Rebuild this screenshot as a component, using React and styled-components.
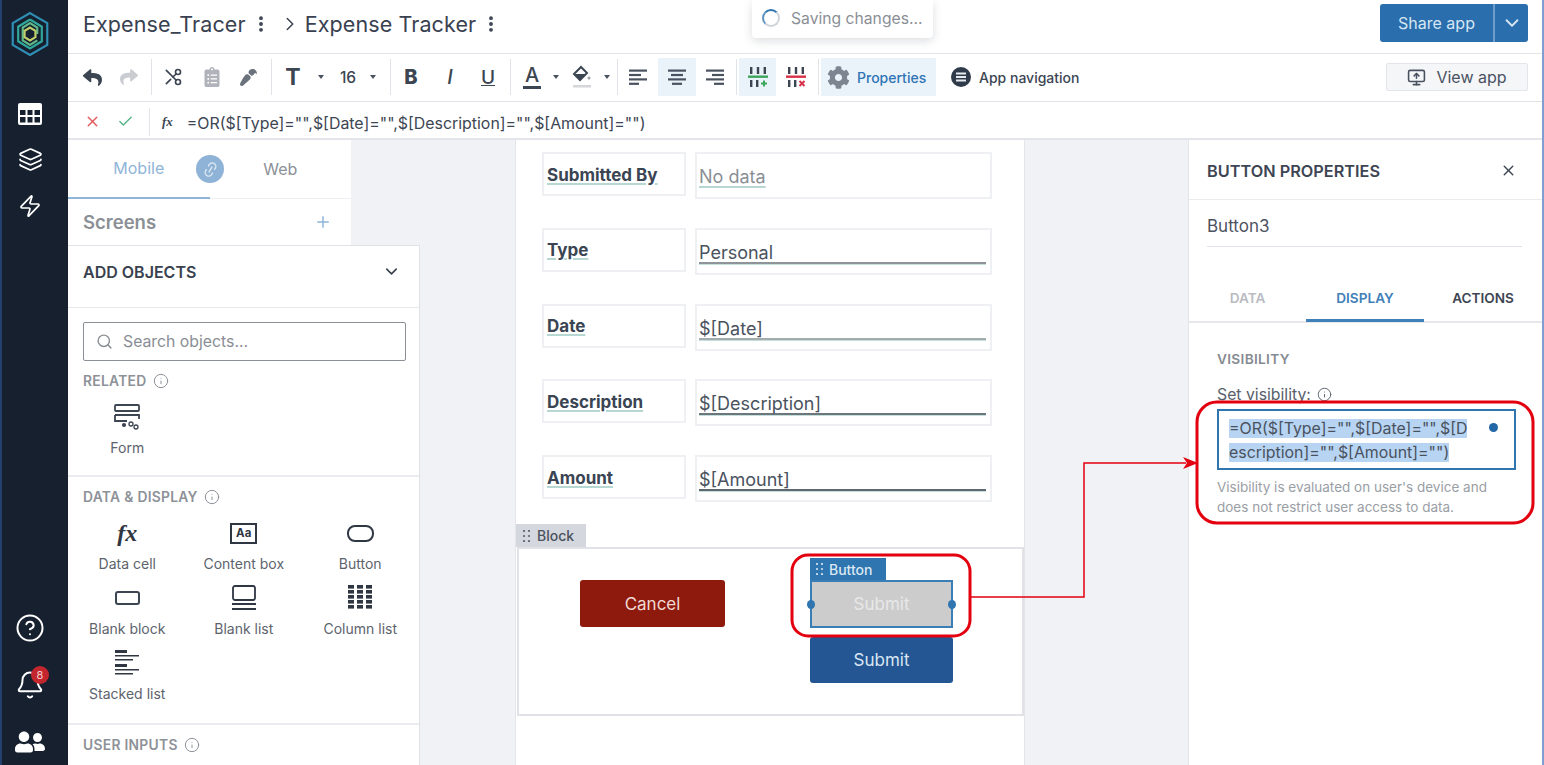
import React from 'react';
import styled, { createGlobalStyle } from 'styled-components';
import { Layers, Zap, CircleHelp, Bell, Search, Info, ChevronDown, ChevronRight, Plus, X, Check, EllipsisVertical, Scissors, Link2, MonitorUp } from 'lucide-react';
import { FaReply, FaShare, FaClipboardList, FaPaintBrush, FaUserFriends, FaCog } from 'react-icons/fa';

const Global = createGlobalStyle`
  html, body { margin: 0; padding: 0; background: #fff; }
  body { font-family: Inter, "Open Sans", sans-serif; color: #2b3441; overflow: hidden; }
  * { box-sizing: border-box; }
`;

const Page = styled.div`
  position: relative;
  display: flex;
  width: 1544px;
  height: 765px;
  overflow: hidden;
  border-right: 2px solid #7f9fd0;
`;
const Nav = styled.nav`
  width: 68px;
  flex: none;
  background: #17202f;
  border-left: 2px solid #24406e;
  display: flex;
  flex-direction: column;
  align-items: center;
  color: #fff;
  padding: 11px 10px 0 0;
`;
const NavTop = styled.div`
  display: flex;
  flex-direction: column;
  align-items: center;
  gap: 22px;
  margin-top: 46px;
`;
const NavBottom = styled.div`
  margin-top: auto;
  display: flex;
  flex-direction: column;
  align-items: center;
  gap: 27px;
  padding-bottom: 8px;
`;
const BellWrap = styled.div`
  position: relative;
  height: 30px;
`;
const Badge = styled.span`
  position: absolute;
  top: -4px;
  right: -4px;
  width: 18px;
  height: 18px;
  border-radius: 50%;
  background: #c4262e;
  color: #f3d0d0;
  font-size: 11px;
  display: flex;
  align-items: center;
  justify-content: center;
`;
const Main = styled.div`
  flex: 1;
  display: flex;
  flex-direction: column;
  min-width: 0;
`;
const Header = styled.header`
  height: 54px;
  flex: none;
  display: flex;
  align-items: center;
  padding: 0 14px 6px 15px;
  border-bottom: 1px solid #e1e4e9;
  font-size: 21.5px;
  color: #394150;
`;
const Crumb = styled.span`
  font-weight: 400;
  letter-spacing: 0.1px;
`;
const Kebab = styled(EllipsisVertical)`
  margin: 0 ${p => p.$right}px 0 ${p => p.$left}px;
`;
const CrumbArrow = styled(ChevronRight)`
  margin: 0 4px 0 4px;
`;
const Share = styled.div`
  margin-left: auto;
  display: flex;
  height: 38px;
  margin-top: -2px;
  border-radius: 3px;
  overflow: hidden;
  background: #2a6ead;
  color: #d7e6f3;
  font-size: 16px;
  align-items: center;
`;
const ShareLabel = styled.span`
  width: 115px;
  text-align: center;
  line-height: 38px;
  border-right: 2px solid #6d9ecb;
`;
const ShareCaret = styled.span`
  width: 33px;
  display: flex;
  justify-content: center;
`;
const Toolbar = styled.div`
  height: 48px;
  flex: none;
  display: flex;
  align-items: center;
  padding: 0 0 1px 6px;
  border-bottom: 1px solid #dfe2e7;
  color: #3c4552;
`;
const Tool = styled.span`
  width: ${p => p.$w}px;
  height: 38px;
  flex: none;
  display: flex;
  align-items: center;
  justify-content: center;
  margin-left: ${p => p.$left || 0}px;
  background: ${p => (p.$active ? '#eaf2fa' : 'transparent')};
  color: ${p => p.$color || 'inherit'};
  font-size: ${p => p.$size || 18}px;
  font-weight: ${p => p.$weight || 500};
  font-style: ${p => (p.$italic ? 'italic' : 'normal')};
  text-decoration: ${p => (p.$under ? 'underline' : 'none')};
`;
const CutIcon = styled(Scissors)`
  transform: scaleX(-1);
`;
const BrushIcon = styled(FaPaintBrush)`
  transform: rotate(180deg);
`;
const Sep = styled.span`
  width: 1px;
  height: 36px;
  flex: none;
  background: #e0e3e8;
  margin-left: ${p => p.$gap}px;
`;
const Caret = styled.span`
  width: ${p => p.$w}px;
  flex: none;
  display: flex;
  justify-content: center;
  &::after {
    content: '';
    border: 3px solid transparent;
    border-top: 4px solid #4a5260;
    border-bottom: 0;
  }
`;
const PropsTool = styled.span`
  width: 115px;
  height: 38px;
  margin-left: 2px;
  flex: none;
  display: flex;
  align-items: center;
  gap: 7px;
  padding-left: 6px;
  background: #eaf2fa;
  color: #2f75b5;
  font-size: 14px;
  font-weight: 500;
`;
const NavTool = styled.span`
  display: flex;
  align-items: center;
  gap: 8px;
  margin-left: 15px;
  font-size: 14px;
  font-weight: 500;
`;
const ViewApp = styled.span`
  margin-left: auto;
  margin-right: 14px;
  width: 142px;
  height: 28px;
  display: flex;
  align-items: center;
  justify-content: center;
  gap: 10px;
  background: #f5f6f8;
  border: 1px solid #e3e5ea;
  border-radius: 2px;
  font-size: 16px;
  color: #4a5260;
`;
const Formula = styled.div`
  height: 38px;
  flex: none;
  display: flex;
  align-items: center;
  border-bottom: 2px solid #e3e5ea;
  padding: 3px 0 0 16px;
  font-size: 15.9px;
  color: #3d4653;
`;
const FormulaSep = styled.span`
  width: 1px;
  height: 28px;
  background: #e3e5ea;
  margin: 0 12px 0 15px;
`;
const ConfirmIcon = styled(Check)`
  margin-left: 16px;
`;
const FormulaText = styled.span`
  margin: 3px 0 0 14px;
`;
const Fx = styled.i`
  font-family: "Liberation Serif", serif;
  font-weight: 700;
  font-size: ${p => p.$size || 13}px;
  color: ${p => p.$color || '#3d4653'};
`;
const Workspace = styled.div`
  flex: 1;
  display: flex;
  background: #f0f2f5;
  min-height: 0;
`;
const LeftCol = styled.div`
  width: 352px;
  flex: none;
`;
const ModeTabs = styled.div`
  width: 283px;
  height: 105px;
  background: #fff;
`;
const TabRow = styled.div`
  position: relative;
  height: 59px;
  display: flex;
  align-items: center;
  border-bottom: 1px solid #eceef1;
  font-size: 16px;
`;
const ModeTab = styled.span`
  width: 142px;
  height: 59px;
  display: flex;
  align-items: center;
  justify-content: center;
  color: ${p => (p.$on ? '#8fb5d8' : '#8c9097')};
  border-bottom: ${p => (p.$on ? '2px solid #8fb5d8' : 'none')};
`;
const LinkCircle = styled.span`
  position: absolute;
  left: 128px;
  top: 15px;
  width: 28px;
  height: 28px;
  border-radius: 50%;
  background: #8fb3d6;
  color: #d8e6f2;
  display: flex;
  align-items: center;
  justify-content: center;
  svg {
    transform: rotate(-60deg);
  }
`;
const ScreensRow = styled.div`
  height: 46px;
  display: flex;
  align-items: center;
  justify-content: space-between;
  padding: 0 19px 1px 15px;
  font-size: 18.5px;
  font-weight: 600;
  color: #8b8f96;
`;
const AddPanel = styled.div`
  height: 520px;
  background: #fff;
  border-top: 1px solid #dfe2e7;
  border-right: 1px solid #dfe2e7;
`;
const AddHeader = styled.div`
  height: 62px;
  display: flex;
  justify-content: space-between;
  padding: 16px 18px 0 15px;
  font-size: 16px;
  font-weight: 600;
  color: #39414e;
  border-bottom: 1px solid #e6e8ec;
`;
const SearchBox = styled.div`
  height: 39px;
  margin: 14px 13px 0 15px;
  display: flex;
  align-items: center;
  gap: 10px;
  padding-left: 12px;
  border: 1px solid #8b8f96;
  border-radius: 2px;
  font-size: 15.8px;
  color: #8a8e95;
`;
const Group = styled.div`
  padding: 12px 0 0 15px;
  height: ${p => p.$h}px;
  border-bottom: ${p => (p.$last ? 'none' : '2px solid #e9ebef')};
`;
const GroupTitle = styled.div`
  display: flex;
  align-items: center;
  gap: 6px;
  font-size: 13.8px;
  font-weight: 600;
  letter-spacing: 0.3px;
  color: #8d9198;
  height: 16px;
`;
const ObjectGrid = styled.div`
  display: grid;
  grid-template-columns: repeat(3, 116.5px);
  grid-auto-rows: 65px;
  margin: 12px 0 0 -14px;
  width: 350px;
`;
const ObjectCell = styled.div`
  display: flex;
  flex-direction: column;
  align-items: center;
  color: #2f3743;
`;
const ObjectIcon = styled.div`
  height: 32px;
  display: flex;
  align-items: center;
  justify-content: center;
`;
const ObjectLabel = styled.div`
  font-size: 14px;
  color: #5d636d;
  margin-top: 6px;
`;
const Canvas = styled.div`
  flex: 1;
  padding-left: 95px;
`;
const PhoneFrame = styled.div`
  width: 510px;
  height: 100%;
  background: #fff;
  border-left: 1px solid #e3e5ea;
  border-right: 1px solid #e3e5ea;
  padding-top: 12px;
`;
const FormRows = styled.div`
  display: flex;
  flex-direction: column;
  gap: 28.8px;
  padding-left: 26px;
`;
const FormRow = styled.div`
  display: flex;
  gap: 9px;
  align-items: flex-start;
`;
const LabelBox = styled.div`
  width: 144px;
  height: 44px;
  border: 2px solid #eff0f3;
  padding: 1px 0 0 3px;
  display: flex;
  align-items: center;
  font-size: 17px;
  font-weight: 700;
  color: #3a4452;
  span {
    text-decoration: underline 2px #b7d8d2;
    text-underline-offset: 2px;
  }
`;
const ValueBox = styled.div`
  width: 297px;
  height: 47px;
  border: 2px solid #eff0f3;
  padding: 11px 4px 0 2px;
  font-size: 18px;
  line-height: 24px;
  color: ${p => (p.$empty ? '#8a8f96' : '#4a525e')};
`;
const ValueText = styled.div`
  height: 23px;
  border-bottom: ${p => (p.$empty ? 'none' : `2px solid ${p.$line}`)};
  box-shadow: ${p => (p.$empty ? 'none' : '0 1px 0 #c5e0da')};
  span {
    text-decoration: ${p => (p.$empty ? 'underline 2px #b7d8d2' : 'none')};
    text-underline-offset: 3px;
  }
`;
const BlockTab = styled.div`
  width: 70px;
  height: 23px;
  margin-top: 22px;
  display: flex;
  align-items: center;
  gap: 6px;
  padding-left: 7px;
  background: #d4d7dd;
  color: #4a525e;
  font-size: 14px;
  font-weight: 500;
`;
const Block = styled.div`
  height: 169px;
  margin-left: 1px;
  width: 507px;
  border: 2px solid #e0e2e7;
  display: flex;
  padding: 9px 0 0 61px;
`;
const BlockCol = styled.div`
  width: ${p => p.$w}px;
  margin-left: ${p => p.$left || 0}px;
  padding-top: ${p => p.$top || 0}px;
`;
const ActionButton = styled.div`
  height: ${p => p.$h}px;
  display: flex;
  align-items: center;
  justify-content: center;
  background: ${p => p.$bg};
  color: ${p => p.$fg};
  border-radius: 3px;
  font-size: 17px;
`;
const ButtonTab = styled.div`
  width: 76px;
  height: 22px;
  display: flex;
  align-items: center;
  gap: 5px;
  padding-left: 6px;
  background: #2f75b0;
  color: #dbe8f4;
  font-size: 14px;
  font-weight: 500;
`;
const SelectedButton = styled.div`
  position: relative;
  height: 48px;
  display: flex;
  align-items: center;
  justify-content: center;
  background: #cccccc;
  border: 2px solid #3b7eb6;
  color: #e8e8e8;
  font-size: 17px;
`;
const Handle = styled.span`
  position: absolute;
  top: 18px;
  ${p => p.$side}: -5px;
  width: 8px;
  height: 9px;
  border-radius: 50%;
  background: #2f75b0;
`;
const SubmitWrap = styled.div`
  margin-top: 9px;
`;
const RightPanel = styled.aside`
  width: 354px;
  flex: none;
  background: #fff;
  border-left: 1px solid #e3e5ea;
`;
const PanelHead = styled.div`
  height: 60px;
  display: flex;
  align-items: center;
  justify-content: space-between;
  padding: 2px 25px 0 18px;
  border-bottom: 1px solid #e9ebef;
  font-size: 16.3px;
  font-weight: 600;
  color: #3d4553;
`;
const NameField = styled.div`
  height: 47px;
  margin: 0 20px 0 18px;
  padding-top: 6px;
  display: flex;
  align-items: center;
  border-bottom: 1px solid #dfe2e7;
  font-size: 17px;
  color: #4d545f;
`;
const PropTabs = styled.div`
  height: 76px;
  display: flex;
  align-items: flex-end;
  border-bottom: 2px solid #e6e8ec;
`;
const PropTab = styled.span`
  width: ${p => p.$w}px;
  height: 50px;
  display: flex;
  align-items: center;
  justify-content: center;
  font-size: 13.6px;
  font-weight: 600;
  color: ${p => p.$color};
  border-bottom: ${p => (p.$on ? '3px solid #3f80b8' : 'none')};
  margin-bottom: -1px;
  padding-top: ${p => (p.$on ? '4px' : '1px')};
`;
const PanelBody = styled.div`
  padding: 28px 27px 0 28px;
`;
const SectionTitle = styled.div`
  font-size: 13.7px;
  font-weight: 600;
  letter-spacing: 0.3px;
  color: #868b93;
`;
const SetLabel = styled.div`
  display: flex;
  align-items: center;
  gap: 6px;
  margin-top: 18px;
  font-size: 15.8px;
  color: #59606b;
`;
const ExprBox = styled.div`
  position: relative;
  width: 299px;
  height: 61px;
  margin-top: 5px;
  border: 2px solid #2f75b0;
  padding: 6px 42px 0 10px;
  font-size: 15.9px;
  line-height: 24px;
  color: #4a525e;
  word-break: break-all;
  span {
    background: #b7d4f3;
  }
`;
const ExprDot = styled.i`
  position: absolute;
  right: 16px;
  top: 12px;
  width: 9px;
  height: 9px;
  border-radius: 50%;
  background: #2268a8;
`;
const HelpText = styled.div`
  margin-top: 7px;
  font-size: 13.5px;
  line-height: 20px;
  color: #9a9ea5;
`;
const Toast = styled.div`
  position: absolute;
  left: 752px;
  top: 0;
  width: 181px;
  height: 38px;
  display: flex;
  align-items: center;
  gap: 11px;
  padding: 0 0 2px 10px;
  background: #fff;
  border-radius: 0 0 4px 4px;
  box-shadow: 0 3px 10px rgba(60, 70, 90, 0.18);
  font-size: 15.7px;
  color: #8a8f96;
`;
const Spinner = styled.span`
  width: 18px;
  height: 18px;
  border-radius: 50%;
  border: 2px solid #cfd4da;
  border-top-color: #2f75b0;
  border-left-color: #5f93c2;
`;
const Annotations = styled.svg`
  position: absolute;
  left: 0;
  top: 0;
  pointer-events: none;
`;

const Logo = () => (
  <svg width="40" height="46" viewBox="0 0 44 50" fill="none" strokeWidth="2.4">
    <path d="M22 2 41 13v24L22 48 3 37V13z" stroke="#2f8fb5" />
    <path d="M22 9 35 17v16l-13 8-13-8V17l13-8" stroke="#2fa79a" />
    <path d="M30 32l-8 5-8-5V18l8-5 8 5v7" stroke="#5fb98a" />
    <path d="M22 18l6 3.5v7L22 32l-6-3.5v-7z" stroke="#c3cf6b" />
  </svg>
);
const TableIcon = () => (
  <svg width="24" height="22" viewBox="0 0 24 22" fill="#fff">
    <path fillRule="evenodd" d="M2 0h20a2 2 0 0 1 2 2v18a2 2 0 0 1-2 2H2a2 2 0 0 1-2-2V2a2 2 0 0 1 2-2zM2 7v5h5.5V7zm7.5 0v5h5V7zm7 0v5H22V7zM2 14v5.500h5.500V14zm7.500 0v5.500h5V14zm7 0v5.500H22V14z" />
  </svg>
);
const ColumnOps = ({ color, mark }) => (
  <svg width="22" height="24" viewBox="0 0 22 24">
    <g fill="#3c4552">
      <rect x="3" y="2" width="2.4" height="7" />
      <rect x="9.800" y="2" width="2.400" height="7" />
      <rect x="16.600" y="2" width="2.400" height="7" />
      <rect x="3" y="15" width="2.400" height="7" />
      <rect x="9" y="15" width="2.400" height="7" />
    </g>
    <rect x="1" y="10.500" width="20" height="2.400" fill={color} />
    {mark === 'plus'
      ? <path d="M14 18.500h6M17 15.500v6" stroke={color} strokeWidth="2" />
      : <path d="M14.500 16l5 5M19.500 16l-5 5" stroke={color} strokeWidth="2" />}
  </svg>
);
const AlignIcon = ({ side }) => {
  const rows = [18, 12, 18, 10];
  return (
    <svg width="20" height="18" viewBox="0 0 20 18" fill="#4a5260">
      {rows.map((w, i) => {
        const x = side === 'left' ? 1 : side === 'right' ? 19 - w : 10 - w / 2;
        return <rect key={i} x={x} y={1.500 + i * 4.400} width={w} height="2.200" />;
      })}
    </svg>
  );
};
const FillIcon = () => (
  <svg width="22" height="24" viewBox="0 0 22 24">
    <path d="M10 2 3 9l6 6 7-7z" fill="#fff" stroke="#3c4552" strokeWidth="2" />
    <path d="M4 9h11l-6 6z" fill="#3c4552" />
    <circle cx="18" cy="13" r="1.500" fill="#9aa0a8" />
    <rect x="2" y="20" width="18" height="2.500" fill="#d4d6da" />
  </svg>
);
const LetterA = styled.span`
  display: inline-block;
  border-bottom: 3px solid #3c4552;
  line-height: 20px;
  font-size: 20px;
  font-weight: 500;
  padding: 0 2px 1px;
`;
const MenuDisc = () => (
  <svg width="20" height="20" viewBox="0 0 20 20">
    <circle cx="10" cy="10" r="10" fill="#2f3a4a" />
    <path d="M5 6.500h10M5 10h10M5 13.500h10" stroke="#e8ebef" strokeWidth="2" />
  </svg>
);
const DragDots = ({ color }) => (
  <svg width="8" height="12" viewBox="0 0 8 12" fill={color}>
    {[1, 6, 11].map(y => [1, 6].map(x => <circle key={`${x}-${y}`} cx={x} cy={y} r="1.100" />))}
  </svg>
);
const FormIcon = () => (
  <svg width="28" height="28" viewBox="0 0 28 28" fill="none" stroke="#3c4552" strokeWidth="1.800">
    <rect x="2" y="2" width="24" height="6" rx="1" />
    <path d="M2 12h24v4M2 12v6h12" />
    <circle cx="11" cy="22" r="1.200" fill="#3c4552" />
    <circle cx="18" cy="21" r="2" strokeWidth="1.300" />
    <circle cx="23" cy="24" r="2" strokeWidth="1.300" />
  </svg>
);
const ContentBoxIcon = styled.span`
  width: 27px;
  height: 21px;
  border: 2px solid #2f3743;
  display: flex;
  align-items: center;
  justify-content: center;
  font-size: 11.5px;
  font-weight: 700;
`;
const PillIcon = styled.span`
  width: 27px;
  height: 17px;
  border: 2px solid #2f3743;
  border-radius: 8px;
`;
const BlockIcon = styled.span`
  width: 25px;
  height: 14px;
  border: 2px solid #3c4552;
  border-radius: 3px;
`;
const BlankListIcon = () => (
  <svg width="26" height="26" viewBox="0 0 26 26" fill="none" stroke="#2f3743" strokeWidth="1.800">
    <rect x="2" y="1" width="22" height="14" rx="2" />
    <path d="M1 19h24M1 24h24" />
  </svg>
);
const ColumnListIcon = () => (
  <svg width="24" height="26" viewBox="0 0 24 26" fill="#2f3743">
    {[0, 9, 18].map(x => [0, 5, 10, 15, 20].map(y => <rect key={`${x}-${y}`} x={x} y={y} width="6" height="3.600" />))}
  </svg>
);
const StackedIcon = () => (
  <svg width="24" height="26" viewBox="0 0 24 26" fill="#2f3743">
    <rect x="0" y="0" width="12" height="3" />
    <rect x="0" y="5" width="24" height="1.500" />
    <rect x="0" y="9" width="18" height="1.500" />
    <rect x="0" y="14" width="12" height="3" />
    <rect x="0" y="19" width="24" height="1.500" />
    <rect x="0" y="23" width="18" height="1.500" />
  </svg>
);

const fields = [
  { label: 'Submitted By', value: 'No data', empty: true },
  { label: 'Type', value: 'Personal', line: '#8e9499' },
  { label: 'Date', value: '$[Date]', line: '#a4abae' },
  { label: 'Description', value: '$[Description]', line: '#6e767d' },
  { label: 'Amount', value: '$[Amount]', line: '#5f6770' },
];
const dataObjects = [
  { label: 'Data cell', icon: <Fx $size={24} $color="#2f3743">fx</Fx> },
  { label: 'Content box', icon: <ContentBoxIcon>Aa</ContentBoxIcon> },
  { label: 'Button', icon: <PillIcon /> },
  { label: 'Blank block', icon: <BlockIcon /> },
  { label: 'Blank list', icon: <BlankListIcon /> },
  { label: 'Column list', icon: <ColumnListIcon /> },
  { label: 'Stacked list', icon: <StackedIcon /> },
];
const expression = '=OR($[Type]="",$[Date]="",$[Description]="",$[Amount]="")';

const App = () => (
  <Page>
    <Global />
    <Nav>
      <Logo />
      <NavTop>
        <TableIcon />
        <Layers size={25} strokeWidth={1.7} />
        <Zap size={24} strokeWidth={1.7} />
      </NavTop>
      <NavBottom>
        <CircleHelp size={30} strokeWidth={1.6} />
        <BellWrap>
          <Bell size={30} strokeWidth={1.6} />
          <Badge>8</Badge>
        </BellWrap>
        <FaUserFriends size={30} />
      </NavBottom>
    </Nav>
    <Main>
      <Header>
        <Crumb>Expense_Tracer</Crumb>
        <Kebab size={20} strokeWidth={2.6} $left={5} $right={4} />
        <CrumbArrow size={22} strokeWidth={1.6} />
        <Crumb>Expense Tracker</Crumb>
        <Kebab size={20} strokeWidth={2.6} $left={5} $right={0} />
        <Share>
          <ShareLabel>Share app</ShareLabel>
          <ShareCaret><ChevronDown size={22} /></ShareCaret>
        </Share>
      </Header>
      <Toolbar>
        <Tool $w={36}><FaReply size={19} /></Tool>
        <Tool $w={38} $color="#c9ccd1"><FaShare size={18} /></Tool>
        <Sep $gap={3} />
        <Tool $w={42}><CutIcon size={20} /></Tool>
        <Tool $w={36} $color="#b0b4ba"><FaClipboardList size={20} /></Tool>
        <Tool $w={36} $color="#6b727c"><BrushIcon size={17} /></Tool>
        <Sep $gap={5} />
        <Tool $w={42} $size={23} $weight={700}>T</Tool>
        <Caret $w={14} />
        <Tool $w={40} $size={15.5}>16</Tool>
        <Caret $w={10} />
        <Sep $gap={12} />
        <Tool $w={40} $size={20} $weight={800}>B</Tool>
        <Tool $w={38} $size={20} $italic>I</Tool>
        <Tool $w={38} $size={19} $under>U</Tool>
        <Sep $gap={3} />
        <Tool $w={42}><LetterA>A</LetterA></Tool>
        <Caret $w={6} />
        <Tool $w={46}><FillIcon /></Tool>
        <Caret $w={4} />
        <Sep $gap={8} />
        <Tool $w={40}><AlignIcon side="left" /></Tool>
        <Tool $w={38} $active><AlignIcon side="center" /></Tool>
        <Tool $w={38}><AlignIcon side="right" /></Tool>
        <Sep $gap={2} />
        <Tool $w={37} $active $left={2}><ColumnOps color="#3ea65a" mark="plus" /></Tool>
        <Tool $w={40}><ColumnOps color="#d8324a" mark="x" /></Tool>
        <Sep $gap={2} />
        <PropsTool><FaCog size={23} color="#7d8590" />Properties</PropsTool>
        <NavTool><MenuDisc />App navigation</NavTool>
        <ViewApp><MonitorUp size={19} />View app</ViewApp>
      </Toolbar>
      <Formula>
        <X size={17} color="#e2585a" />
        <ConfirmIcon size={17} color="#55b58a" />
        <FormulaSep />
        <Fx>fx</Fx>
        <FormulaText>{expression}</FormulaText>
      </Formula>
      <Workspace>
        <LeftCol>
          <ModeTabs>
            <TabRow>
              <ModeTab $on>Mobile</ModeTab>
              <ModeTab>Web</ModeTab>
              <LinkCircle><Link2 size={17} /></LinkCircle>
            </TabRow>
            <ScreensRow>Screens<Plus size={18} color="#8fb5d8" /></ScreensRow>
          </ModeTabs>
          <AddPanel>
            <AddHeader>ADD OBJECTS<ChevronDown size={19} /></AddHeader>
            <SearchBox><Search size={17} />Search objects...</SearchBox>
            <Group $h={116}>
              <GroupTitle>RELATED <Info size={16} strokeWidth={1.5} /></GroupTitle>
              <ObjectGrid>
                <ObjectCell><ObjectIcon><FormIcon /></ObjectIcon><ObjectLabel>Form</ObjectLabel></ObjectCell>
              </ObjectGrid>
            </Group>
            <Group $h={248}>
              <GroupTitle>DATA &amp; DISPLAY <Info size={16} strokeWidth={1.5} /></GroupTitle>
              <ObjectGrid>
                {dataObjects.map(o => (
                  <ObjectCell key={o.label}><ObjectIcon>{o.icon}</ObjectIcon><ObjectLabel>{o.label}</ObjectLabel></ObjectCell>
                ))}
              </ObjectGrid>
            </Group>
            <Group $h={40} $last>
              <GroupTitle>USER INPUTS <Info size={16} strokeWidth={1.5} /></GroupTitle>
            </Group>
          </AddPanel>
        </LeftCol>
        <Canvas>
          <PhoneFrame>
            <FormRows>
              {fields.map(f => (
                <FormRow key={f.label}>
                  <LabelBox><span>{f.label}</span></LabelBox>
                  <ValueBox $empty={f.empty}>
                    <ValueText $empty={f.empty} $line={f.line}><span>{f.value}</span></ValueText>
                  </ValueBox>
                </FormRow>
              ))}
            </FormRows>
            <BlockTab><DragDots color="#5d646e" />Block</BlockTab>
            <Block>
              <BlockCol $w={145} $top={22}>
                <ActionButton $h={47} $bg="#8e1a0e" $fg="#f0d9d4">Cancel</ActionButton>
              </BlockCol>
              <BlockCol $w={143} $left={85}>
                <ButtonTab><DragDots color="#cfe0ef" />Button</ButtonTab>
                <SelectedButton>
                  <Handle $side="left" />
                  Submit
                  <Handle $side="right" />
                </SelectedButton>
                <SubmitWrap>
                  <ActionButton $h={46} $bg="#235692" $fg="#dbe6f2">Submit</ActionButton>
                </SubmitWrap>
              </BlockCol>
            </Block>
          </PhoneFrame>
        </Canvas>
        <RightPanel>
          <PanelHead>BUTTON PROPERTIES<X size={17} /></PanelHead>
          <NameField>Button3</NameField>
          <PropTabs>
            <PropTab $w={117} $color="#b9bcc2">DATA</PropTab>
            <PropTab $w={118} $on $color="#3f80b8">DISPLAY</PropTab>
            <PropTab $w={118} $color="#3d4553">ACTIONS</PropTab>
          </PropTabs>
          <PanelBody>
            <SectionTitle>VISIBILITY</SectionTitle>
            <SetLabel>Set visibility: <Info size={15} strokeWidth={1.5} /></SetLabel>
            <ExprBox>
              <span>{expression}</span>
              <ExprDot />
            </ExprBox>
            <HelpText>Visibility is evaluated on user's device and does not restrict user access to data.</HelpText>
          </PanelBody>
        </RightPanel>
      </Workspace>
    </Main>
    <Toast><Spinner />Saving changes...</Toast>
    <Annotations width="1544" height="765" fill="none" stroke="#e3000f">
      <rect x="792" y="555" width="178" height="81" rx="16" strokeWidth="3" />
      <rect x="1197" y="402" width="336" height="121" rx="20" strokeWidth="3" />
      <path d="M970 597H1084V463H1186" strokeWidth="1.500" />
      <path d="M1198 463l-15-6 4 6-4 6z" fill="#e3000f" stroke="none" />
    </Annotations>
  </Page>
);

export default App;
